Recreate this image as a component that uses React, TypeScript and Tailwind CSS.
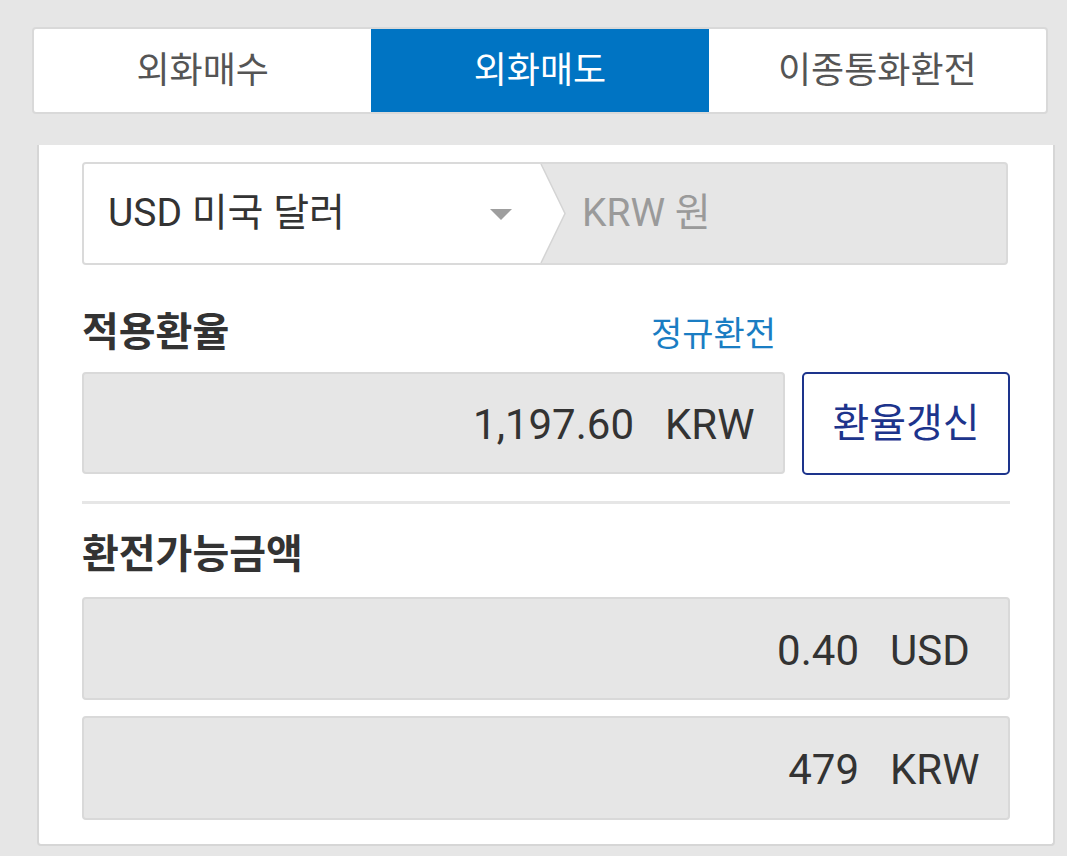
import React from "react";

const font = { fontFamily: 'Roboto, "Noto Sans CJK KR", "Noto Sans", sans-serif' };

function ValueBox({ num, cur, className }: { num: string; cur: string; className: string }) {
  return (
    <div
      className={`flex items-center justify-end rounded-[4px] border-2 border-[#d9d9d9] bg-[#e6e6e6] pr-[28px] pt-[4px] text-[42px] leading-none text-[#333333] ${className}`}
    >
      <span>{num}</span>
      <span className="ml-[31px] w-[90px] text-left">{cur}</span>
    </div>
  );
}

export default function App() {
  return (
    <div className="min-h-[856px] w-full bg-[#e6e6e6] px-[32px] pt-[27px]" style={font}>
      {/* Tabs */}
      <div className="flex h-[87px] w-[1016px] overflow-hidden rounded-[4px] border-2 border-[#d9d9d9] bg-white">
        <div className="flex flex-1 items-center justify-center text-[36px] leading-none text-[#555555]">외화매수</div>
        <div className="flex flex-1 items-center justify-center bg-[#0074c3] text-[36px] leading-none text-white">
          외화매도
        </div>
        <div className="flex flex-1 items-center justify-center text-[36px] leading-none text-[#555555]">이종통화환전</div>
      </div>

      {/* Card */}
      <div className="ml-[5px] mt-[31px] flex w-[1018px] flex-col rounded-b-[4px] border-x-2 border-b-2 border-[#d6d6d6] bg-white pb-[24px] pl-[43px] pr-[43px] pt-[17px]">
        {/* currency select */}
        <div className="mr-[2px] flex h-[103px] overflow-hidden rounded-[4px] border-2 border-[#dadada] bg-[#e6e6e6]">
          <div className="flex w-[456px] items-center bg-white pl-[24px] pr-[28px]">
            <span className="flex-1 text-[39px] leading-none text-[#333333]">USD 미국 달러</span>
            <svg width="22" height="11" viewBox="0 0 22 11" className="mt-[2px]">
              <polygon points="0,0 22,0 11,11" fill="#9e9e9e" />
            </svg>
          </div>
          <svg width="26" height="99" viewBox="0 0 26 99" preserveAspectRatio="none" className="h-full shrink-0">
            <polygon points="0,0 1,0 25,49.5 1,99 0,99" fill="#ffffff" />
            <polyline points="1,0 25,49.5 1,99" fill="none" stroke="#d4d4d4" strokeWidth="1.5" />
          </svg>
          <div className="flex flex-1 items-center pl-[16px] text-[39px] leading-none text-[#9a9a9a]">KRW 원</div>
        </div>

        {/* label row */}
        <div className="mt-[37px] flex h-[60px] items-baseline pt-[8px]">
          <span className="text-[40px] font-bold leading-[46px] text-[#333333]">적용환율</span>
          <span className="ml-auto mr-[234px] text-[34px] leading-[46px] text-[#1a7dc3]">정규환전</span>
        </div>

        {/* rate row */}
        <div className="mt-[10px] flex h-[103px] gap-[17px]">
          <ValueBox num="1,197.60" cur="KRW" className="h-[102px] flex-1" />
          <button className="flex h-[103px] w-[208px] items-center justify-center rounded-[5px] border-2 border-[#1d348c] bg-white text-[40px] font-normal leading-none text-[#1d348c]">
            환율갱신
          </button>
        </div>

        {/* divider */}
        <div className="mt-[26px] h-[3px] bg-[#e6e6e6]" />

        {/* available */}
        <div className="mt-[21px] flex h-[60px] items-center">
          <span className="text-[40px] font-bold leading-none text-[#333333]">환전가능금액</span>
        </div>

        <ValueBox num="0.40" cur="USD" className="mt-[12px] h-[103px]" />
        <ValueBox num="479" cur="KRW" className="mt-[16px] h-[104px]" />
      </div>
    </div>
  );
}
